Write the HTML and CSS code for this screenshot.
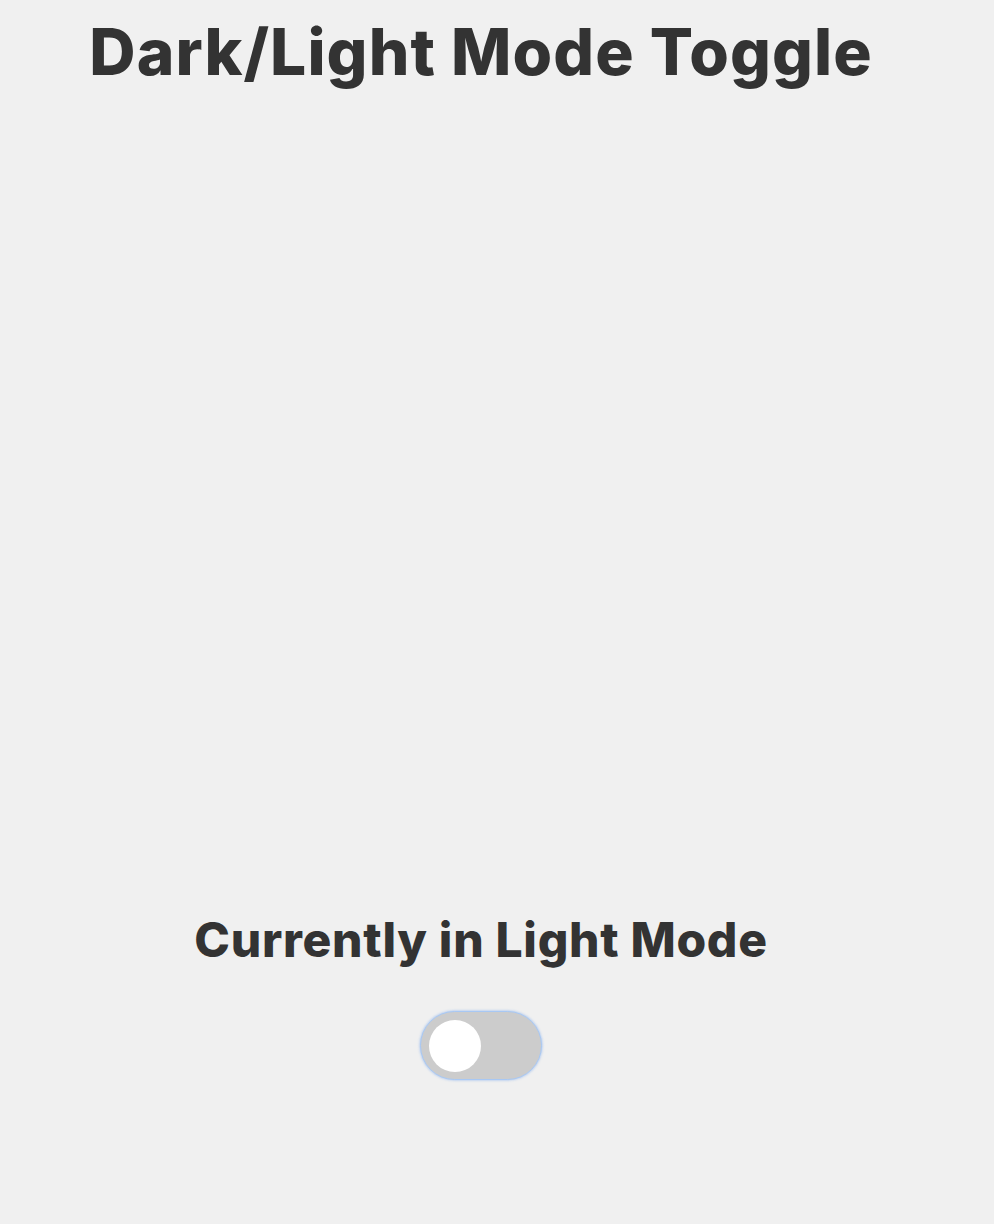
FILE: index.html
```html
<!DOCTYPE html>
<html lang="en">
<head>
<meta charset="utf-8">
<title>Dark/Light Mode Toggle</title>
<link rel="stylesheet" href="styles.css">
</head>
<body>
<div class="page">
  <h1 class="title">Dark/Light Mode Toggle</h1>
  <section class="panel">
    <h2 class="status">Currently in Light Mode</h2>
    <button class="toggle" type="button" aria-label="Toggle dark mode"><span class="knob"></span></button>
  </section>
</div>
</body>
</html>
```

FILE: styles.css
```css
html, body {
  margin: 0;
  padding: 0;
  background: #f0f0f0;
}
body {
  font-family: Inter, "Noto Sans", sans-serif;
  color: #333333;
}
.page {
  box-sizing: border-box;
  min-height: 100vh;
  width: 962px;
  display: flex;
  flex-direction: column;
  align-items: center;
}
.title {
  margin: 10px 0 0;
  font-size: 64px;
  font-weight: 800;
  line-height: 1.3;
  letter-spacing: 1.1px;
  text-align: center;
}
.panel {
  margin-top: auto;
  padding-bottom: 144px;
  display: flex;
  flex-direction: column;
  align-items: center;
}
.status {
  margin: 0 0 40px;
  font-size: 48px;
  font-weight: 800;
  line-height: 1.3;
  letter-spacing: 0.7px;
  text-align: center;
}
.toggle {
  box-sizing: border-box;
  width: 122px;
  height: 69px;
  padding: 0 0 0 8px;
  border: 1px solid #a8c8f4;
  border-radius: 35px;
  background: #cccccc;
  box-shadow: 0 0 2px 1px rgba(140, 180, 240, 0.45);
  display: flex;
  align-items: center;
  cursor: pointer;
}
.knob {
  width: 52px;
  height: 52px;
  border-radius: 50%;
  background: #ffffff;
}
```
